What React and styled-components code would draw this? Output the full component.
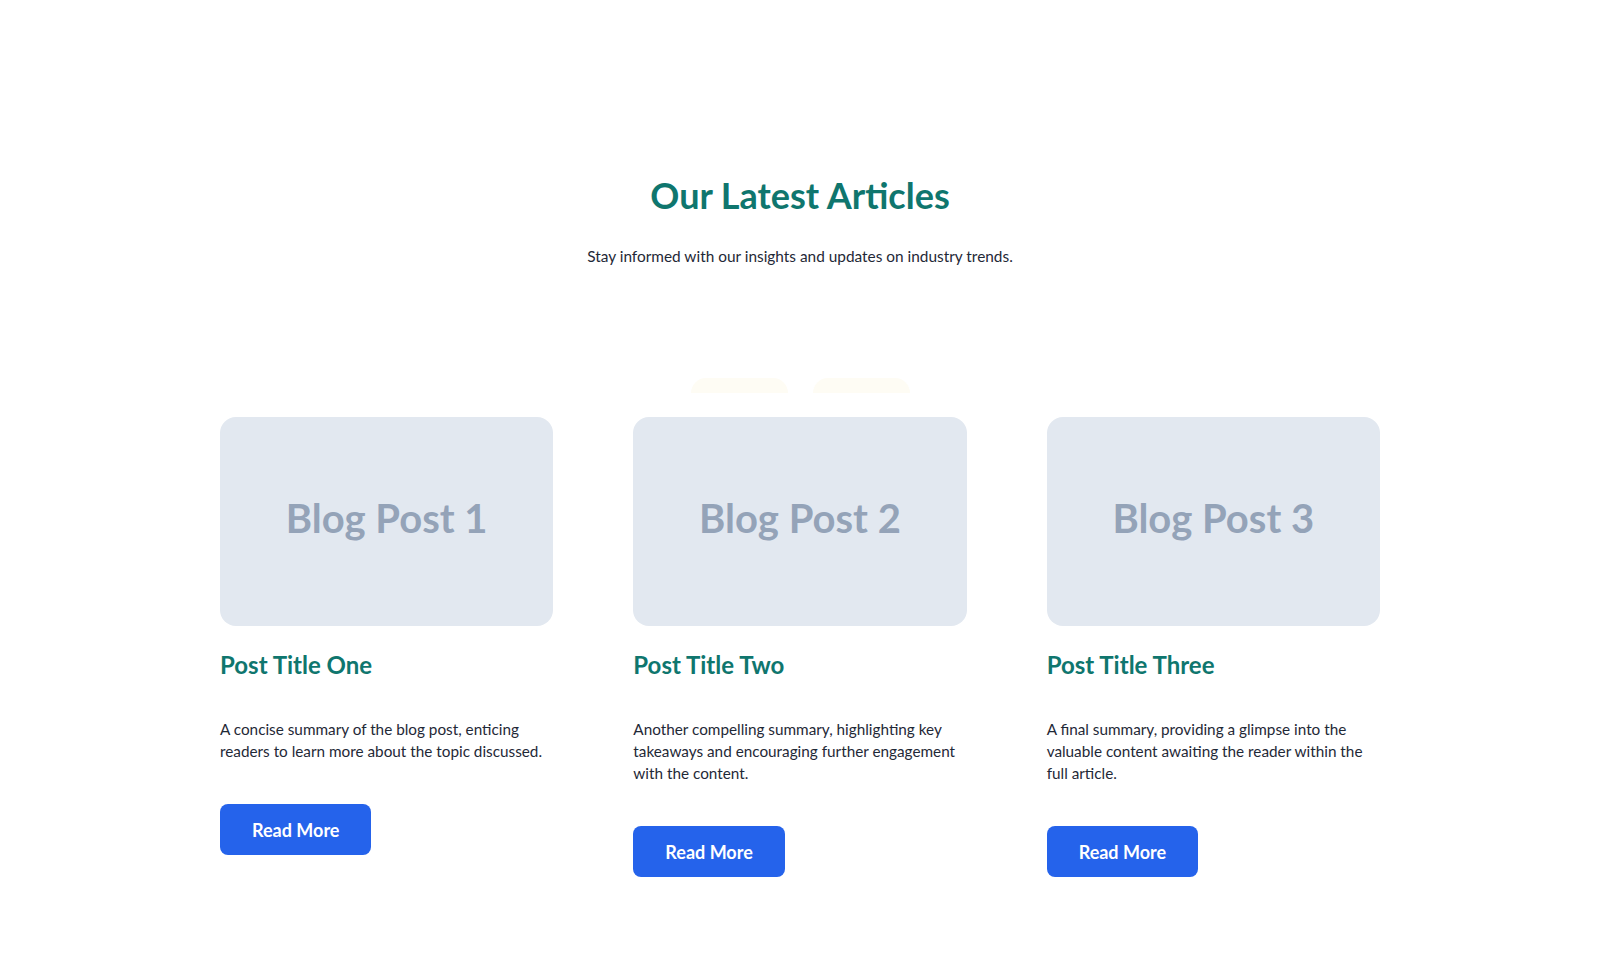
import styled, { createGlobalStyle } from 'styled-components';

const GlobalStyle = createGlobalStyle`
  * { box-sizing: border-box; }
  body {
    margin: 0;
    background: #ffffff;
    font-family: Lato, "Noto Sans", sans-serif;
    color: #1f2937;
  }
`;

const posts = [
  {
    id: 1,
    title: 'Post Title One',
    summary: 'A concise summary of the blog post, enticing readers to learn more about the topic discussed.',
  },
  {
    id: 2,
    title: 'Post Title Two',
    summary: 'Another compelling summary, highlighting key takeaways and encouraging further engagement with the content.',
  },
  {
    id: 3,
    title: 'Post Title Three',
    summary: 'A final summary, providing a glimpse into the valuable content awaiting the reader within the full article.',
  },
];

export default function App() {
  return (
    <>
      <GlobalStyle />
      <Section>
        <Header>
          <Heading>Our Latest Articles</Heading>
          <Lead>Stay informed with our insights and updates on industry trends.</Lead>
        </Header>

        <Filters>
          <FilterTab />
          <FilterTab />
        </Filters>

        <Grid>
          {posts.map((post) => (
            <Card key={post.id}>
              <Thumb>
                <ThumbLabel>Blog Post {post.id}</ThumbLabel>
              </Thumb>
              <PostTitle>{post.title}</PostTitle>
              <Summary>{post.summary}</Summary>
              <ReadMore type="button">Read More</ReadMore>
            </Card>
          ))}
        </Grid>
      </Section>
    </>
  );
}

const Section = styled.section`
  max-width: 1200px;
  margin: 0 auto;
  padding: 174px 20px 80px;
`;

const Header = styled.header`
  display: flex;
  flex-direction: column;
  align-items: center;
  text-align: center;
`;

const Heading = styled.h2`
  margin: 0;
  font-size: 36px;
  line-height: 1.2;
  font-weight: 700;
  color: #0f766e;
`;

const Lead = styled.p`
  margin: 28px 0 0;
  font-size: 15.4px;
  line-height: 1.5;
  color: #1f2937;
`;

const Filters = styled.div`
  display: flex;
  justify-content: center;
  gap: 25px;
  margin-top: 110px;
`;

const FilterTab = styled.span`
  width: 97px;
  height: 15px;
  border-radius: 16px 16px 0 0;
  background: #fefcf4;
`;

const Grid = styled.div`
  display: grid;
  grid-template-columns: repeat(3, 1fr);
  column-gap: 80px;
  align-items: start;
  margin-top: 24px;
`;

const Card = styled.article`
  display: flex;
  flex-direction: column;
  align-items: flex-start;
`;

const Thumb = styled.div`
  width: 100%;
  height: 209px;
  padding-bottom: 8px;
  border-radius: 16px;
  background: #e2e8f0;
  display: flex;
  align-items: center;
  justify-content: center;
`;

const ThumbLabel = styled.span`
  font-size: 40px;
  font-weight: 700;
  color: #94a3b8;
`;

const PostTitle = styled.h3`
  margin: 25px 0 0;
  font-size: 24px;
  line-height: 1.2;
  font-weight: 700;
  color: #0f766e;
`;

const Summary = styled.p`
  margin: 38px 0 0;
  font-size: 15.3px;
  line-height: 22px;
  color: #1f2937;
`;

const ReadMore = styled.button`
  margin-top: 42px;
  height: 51px;
  padding: 0 32px;
  border: 0;
  border-radius: 8px;
  background: #2563eb;
  color: #ffffff;
  font-family: inherit;
  font-size: 18px;
  font-weight: 700;
  cursor: pointer;
`;
